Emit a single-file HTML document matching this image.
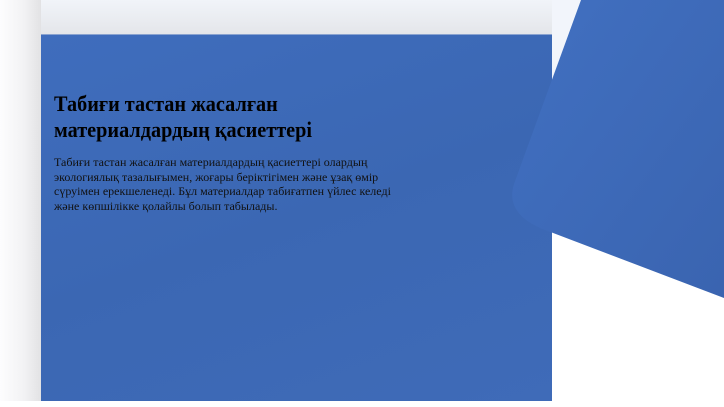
<!DOCTYPE html>
<html><head><meta charset="utf-8"><style>
html,body{margin:0;padding:0;width:724px;height:407px;overflow:hidden;background:#fff;position:relative}
.top{position:absolute;left:0;top:0;width:552px;height:34px;background:linear-gradient(#f1f4f9,#e4e6ea)}
.topr{position:absolute;left:552px;top:0;width:40px;height:80px;background:#f2f5fb}
.left{position:absolute;left:0;top:0;width:41px;height:401px;background:linear-gradient(90deg,#fdfdfe 0%,#f2f2f4 60%,#e2e2e4 100%)}
.panel{position:absolute;left:41px;top:34px;width:511px;height:367px;background:linear-gradient(160deg,#3f6dbd,#3b67b3 50%,#3f6bb8);border-top:1px solid #8aa3d0;box-sizing:border-box}
svg{position:absolute;left:0;top:0}
h1{position:absolute;left:54px;top:91px;margin:0;font:bold 22px/26px "Liberation Serif",serif;color:#000;width:360px;transform:scaleX(0.92);transform-origin:0 0}
p{position:absolute;left:54px;top:155px;margin:0;font:12px/14.5px "Liberation Serif",serif;color:#111;width:340px}
</style></head><body>
<div class="top"></div><div class="topr"></div><div class="left"></div>
<div class="panel"></div>
<svg width="724" height="407"><defs><linearGradient id="g" x1="0" y1="0" x2="1" y2="1"><stop offset="0" stop-color="#4170c1"/><stop offset="1" stop-color="#3a64b0"/></linearGradient></defs>
<path d="M581 0 L724 0 L724 298 L540 228 Q505 212 514 184 Z" fill="url(#g)"/></svg>
<h1>Табиғи тастан жасалған<br>материалдардың қасиеттері</h1>
<p>Табиғи тастан жасалған материалдардың қасиеттері олардың экологиялық тазалығымен, жоғары беріктігімен және ұзақ өмір сүруімен ерекшеленеді. Бұл материалдар табиғатпен үйлес келеді және көпшілікке қолайлы болып табылады.</p>
</body></html>
